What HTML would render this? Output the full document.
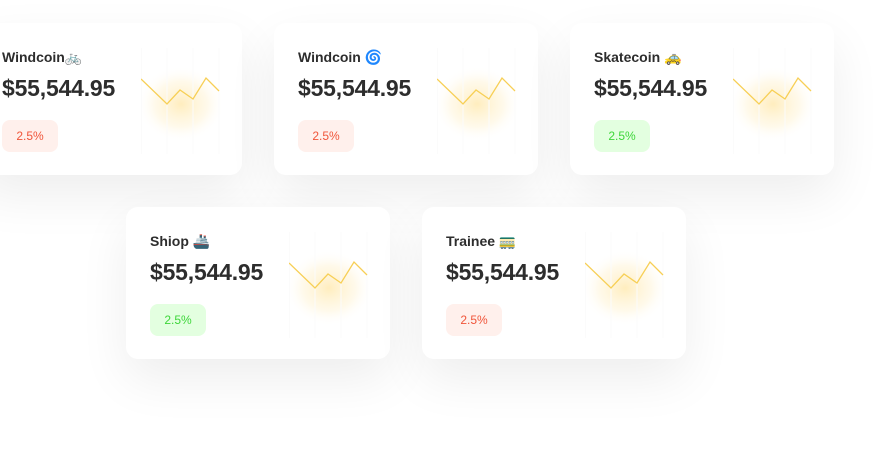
<!DOCTYPE html>
<html><head><meta charset="utf-8"><style>
body{margin:0;width:894px;height:457px;background:#fff;position:relative;overflow:hidden;font-family:"Liberation Sans","Noto Sans CJK JP",sans-serif}
.c{position:absolute;width:264px;height:152px;background:#fff;border-radius:12px;box-shadow:0 20px 50px rgba(0,0,0,0.07)}
.t{position:absolute;left:24px;top:26px;font-size:14px;font-weight:bold;color:#2d2d2d}
.p{position:absolute;left:24px;top:52px;font-size:23px;font-weight:bold;color:#2d2d2d;letter-spacing:-0.2px}
.b{position:absolute;left:24px;top:97px;width:56px;height:32px;border-radius:8px;font-size:12px;line-height:32px;text-align:center}
.r{background:#fff0ec;color:#f0553a}.g{background:#e3ffe0;color:#3ed63a}
svg{position:absolute;left:163px;top:25px}
</style></head><body>
<svg width="0" height="0" style="position:absolute"><defs><radialGradient id="gr" cx="0.5" cy="0.5" r="0.5"><stop offset="0" stop-color="#ffe7a8" stop-opacity="0.75"/><stop offset="0.6" stop-color="#fff1cc" stop-opacity="0.4"/><stop offset="1" stop-color="#fff" stop-opacity="0"/></radialGradient></defs></svg>
<div class="c" style="left:-22px;top:23px"><div class="t">Windcoin🚲</div><div class="p">$55,544.95</div><div class="b r">2.5%</div>
<svg width="80" height="106"><ellipse cx="40" cy="56" rx="44" ry="38" fill="url(#gr)"/><g stroke="#fbfbfb"><line x1="0.5" y1="0" x2="0.5" y2="106"/><line x1="26" y1="0" x2="26" y2="106"/><line x1="52" y1="0" x2="52" y2="106"/><line x1="78" y1="0" x2="78" y2="106"/></g><polyline points="0,31 26,56 39,42 52,51 65,30 78,43" fill="none" stroke="#f7cf55" stroke-width="1.3"/></svg></div>
<div class="c" style="left:274px;top:23px"><div class="t">Windcoin 🌀</div><div class="p">$55,544.95</div><div class="b r">2.5%</div>
<svg width="80" height="106"><ellipse cx="40" cy="56" rx="44" ry="38" fill="url(#gr)"/><g stroke="#fbfbfb"><line x1="0.5" y1="0" x2="0.5" y2="106"/><line x1="26" y1="0" x2="26" y2="106"/><line x1="52" y1="0" x2="52" y2="106"/><line x1="78" y1="0" x2="78" y2="106"/></g><polyline points="0,31 26,56 39,42 52,51 65,30 78,43" fill="none" stroke="#f7cf55" stroke-width="1.3"/></svg></div>
<div class="c" style="left:570px;top:23px"><div class="t">Skatecoin 🚕</div><div class="p">$55,544.95</div><div class="b g">2.5%</div>
<svg width="80" height="106"><ellipse cx="40" cy="56" rx="44" ry="38" fill="url(#gr)"/><g stroke="#fbfbfb"><line x1="0.5" y1="0" x2="0.5" y2="106"/><line x1="26" y1="0" x2="26" y2="106"/><line x1="52" y1="0" x2="52" y2="106"/><line x1="78" y1="0" x2="78" y2="106"/></g><polyline points="0,31 26,56 39,42 52,51 65,30 78,43" fill="none" stroke="#f7cf55" stroke-width="1.3"/></svg></div>
<div class="c" style="left:126px;top:207px"><div class="t">Shiop 🚢</div><div class="p">$55,544.95</div><div class="b g">2.5%</div>
<svg width="80" height="106"><ellipse cx="40" cy="56" rx="44" ry="38" fill="url(#gr)"/><g stroke="#fbfbfb"><line x1="0.5" y1="0" x2="0.5" y2="106"/><line x1="26" y1="0" x2="26" y2="106"/><line x1="52" y1="0" x2="52" y2="106"/><line x1="78" y1="0" x2="78" y2="106"/></g><polyline points="0,31 26,56 39,42 52,51 65,30 78,43" fill="none" stroke="#f7cf55" stroke-width="1.3"/></svg></div>
<div class="c" style="left:422px;top:207px"><div class="t">Trainee 🚃</div><div class="p">$55,544.95</div><div class="b r">2.5%</div>
<svg width="80" height="106"><ellipse cx="40" cy="56" rx="44" ry="38" fill="url(#gr)"/><g stroke="#fbfbfb"><line x1="0.5" y1="0" x2="0.5" y2="106"/><line x1="26" y1="0" x2="26" y2="106"/><line x1="52" y1="0" x2="52" y2="106"/><line x1="78" y1="0" x2="78" y2="106"/></g><polyline points="0,31 26,56 39,42 52,51 65,30 78,43" fill="none" stroke="#f7cf55" stroke-width="1.3"/></svg></div>
</body></html>
